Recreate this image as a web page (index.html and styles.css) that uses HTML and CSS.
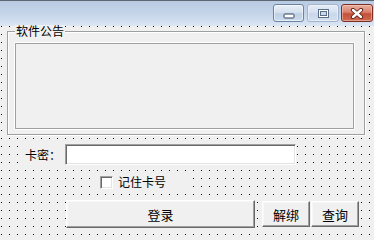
FILE: index.html
```html
<!DOCTYPE html>
<html lang="zh-CN">
<head>
<meta charset="utf-8">
<title>登录</title>
<link rel="stylesheet" href="styles.css">
</head>
<body>
<div class="window">
  <div class="titlebar">
    <div class="cap cap-min">
      <svg class="glyph-min" width="12" height="6" viewBox="0 0 12 6"><rect x="1" y="1" width="10" height="4" rx="1" fill="#fff" stroke="#33445c" stroke-width="1"/></svg>
    </div>
    <div class="cap cap-max">
      <svg width="11" height="9" viewBox="0 0 11 9"><rect x="0.5" y="0.5" width="10" height="8" fill="#fff" stroke="#5a6d88" stroke-width="1"/><rect x="2.5" y="2.5" width="6" height="4" fill="#c9d7ea" stroke="#5a6d88" stroke-width="1"/></svg>
    </div>
    <div class="cap cap-close">
      <svg width="14" height="11" viewBox="0 0 14 11"><path d="M3 2 L11 9 M11 2 L3 9" stroke="#5b1d12" stroke-width="4.2" stroke-linecap="round"/><path d="M3 2 L11 9 M11 2 L3 9" stroke="#fff" stroke-width="2.4" stroke-linecap="round"/></svg>
    </div>
  </div>
  <div class="client">
    <div class="group">
      <div class="group-title">软件公告</div>
      <div class="notice"></div>
    </div>
    <div class="key-row">
      <label class="key-label" for="key">卡密：</label>
      <input class="key-input" id="key" type="text">
    </div>
    <div class="check-row">
      <span class="checkbox"></span>
      <span class="check-text">记住卡号</span>
    </div>
    <div class="btn-row">
      <button class="btn btn-login">登录</button>
      <button class="btn btn-small btn-unbind">解绑</button>
      <button class="btn btn-small btn-query">查询</button>
    </div>
  </div>
</div>
</body>
</html>
```
FILE: styles.css
```css
* { box-sizing: border-box; }
html, body {
  margin: 0;
  padding: 0;
  width: 374px;
  height: 235px;
  overflow: hidden;
  background: #f0f0f0;
  font-family: "Noto Sans CJK SC", "Noto Sans", sans-serif;
  font-size: 12px;
  color: #000;
}
.window {
  width: 374px;
  height: 235px;
  display: flex;
  flex-direction: column;
}
.titlebar {
  height: 26px;
  flex: none;
  display: flex;
  justify-content: flex-end;
  align-items: flex-start;
  padding: 4px 1px 0 0;
  border-top: 1px solid #5d6673;
  background: linear-gradient(to bottom, #b9cbe2 0%, #c3d3e8 45%, #d3e0f0 85%, #dde7f3 100%);
}
.cap {
  height: 18px;
  margin-top: -1px;
  border-radius: 3px;
  display: flex;
  justify-content: center;
  align-items: center;
}
.cap-min {
  width: 31px;
  border: 1px solid #6b83a3;
  background: linear-gradient(to bottom, #e8eff8 0%, #d5e1ef 45%, #bfd0e6 55%, #cddbeb 100%);
  box-shadow: inset 0 0 0 1px rgba(255,255,255,0.55);
}
.glyph-min { margin-top: 5px; }
.cap-max {
  width: 32px;
  margin-left: 3px;
  border: 1px solid #a2b4cb;
  background: linear-gradient(to bottom, #e4ecf6 0%, #d6e2f0 45%, #c8d7ea 55%, #d4e0ef 100%);
  box-shadow: inset 0 0 0 1px rgba(255,255,255,0.45);
}
.cap-close {
  width: 32px;
  margin-left: 2px;
  border: 1px solid #7d2e22;
  background: linear-gradient(to bottom, #e9b0a2 0%, #d9806c 45%, #c4503a 55%, #cf6a52 100%);
  box-shadow: inset 0 0 0 1px rgba(255,220,210,0.45);
}
.client {
  flex: 1;
  display: flex;
  flex-direction: column;
  align-items: flex-start;
  background:
    linear-gradient(to right, transparent 1px, #f0f0f0 1px) 1px 0 / 8px 8px,
    linear-gradient(to bottom, transparent 1px, #f0f0f0 1px) 1px 0 / 8px 8px,
    #000;
}
.group {
  width: 358px;
  margin: 5px 0 0 7px;
  padding: 0 0 5px 0;
  border: 1px solid #a0a0a0;
  box-shadow: 1px 1px 0 #fff, inset 1px 1px 0 #fff;
  background: #f0f0f0;
}
.group-title {
  width: max-content;
  height: 12px;
  line-height: 12px;
  margin: -7px 0 0 7px;
  padding: 0 1px;
  background: #f0f0f0;
  font-size: 12px;
}
.notice {
  width: 339px;
  height: 86px;
  margin: 6px 0 0 7px;
  border: 1px solid #a0a0a0;
  box-shadow: 0 0 0 1px #fff;
  background: #f0f0f0;
}
.key-row {
  display: flex;
  align-items: center;
  margin: 9px 0 0 20px;
  height: 21px;
}
.key-label {
  width: 43px;
  height: 18px;
  line-height: 18px;
  padding-left: 5px;
  background: #f0f0f0;
  font-size: 12px;
}
.key-input {
  appearance: none;
  -webkit-appearance: none;
  margin: 0 0 0 2px;
  padding: 0;
  width: 231px;
  height: 21px;
  background: #fff;
  border: 1px solid;
  border-color: #a0a0a0 #fff #fff #a0a0a0;
  box-shadow: inset 1px 1px 0 #696969, inset -1px -1px 0 #e3e3e3;
  outline: none;
  font: inherit;
}
.check-row {
  display: flex;
  align-items: center;
  width: 92px;
  height: 20px;
  margin: 7px 0 0 96px;
  padding-left: 4px;
  background: #f0f0f0;
}
.checkbox {
  width: 13px;
  height: 13px;
  background: #fff;
  border: 1px solid;
  border-color: #a0a0a0 #fff #fff #a0a0a0;
  box-shadow: inset 1px 1px 0 #696969, inset -1px -1px 0 #e3e3e3;
}
.check-text {
  margin-left: 5px;
  font-size: 12px;
  line-height: 14px;
}
.btn-row {
  display: flex;
  align-items: flex-start;
  margin: 8px 0 0 66px;
}
.btn {
  margin: 0;
  padding: 0;
  background: #f0f0f0;
  border: 1px solid;
  border-color: #fff #696969 #696969 #fff;
  box-shadow: inset -1px -1px 0 #a0a0a0, inset 1px 1px 0 #f7f7f7;
  font-family: "Noto Sans CJK SC", "Noto Sans", sans-serif;
  font-size: 13px;
  color: #000;
  line-height: 1;
}
.btn-login {
  width: 189px;
  height: 28px;
}
.btn-small {
  width: 48px;
  height: 26px;
  margin-top: 1px;
}
.btn-unbind { margin-left: 7px; }
.btn-query { margin-left: 1px; }
```
